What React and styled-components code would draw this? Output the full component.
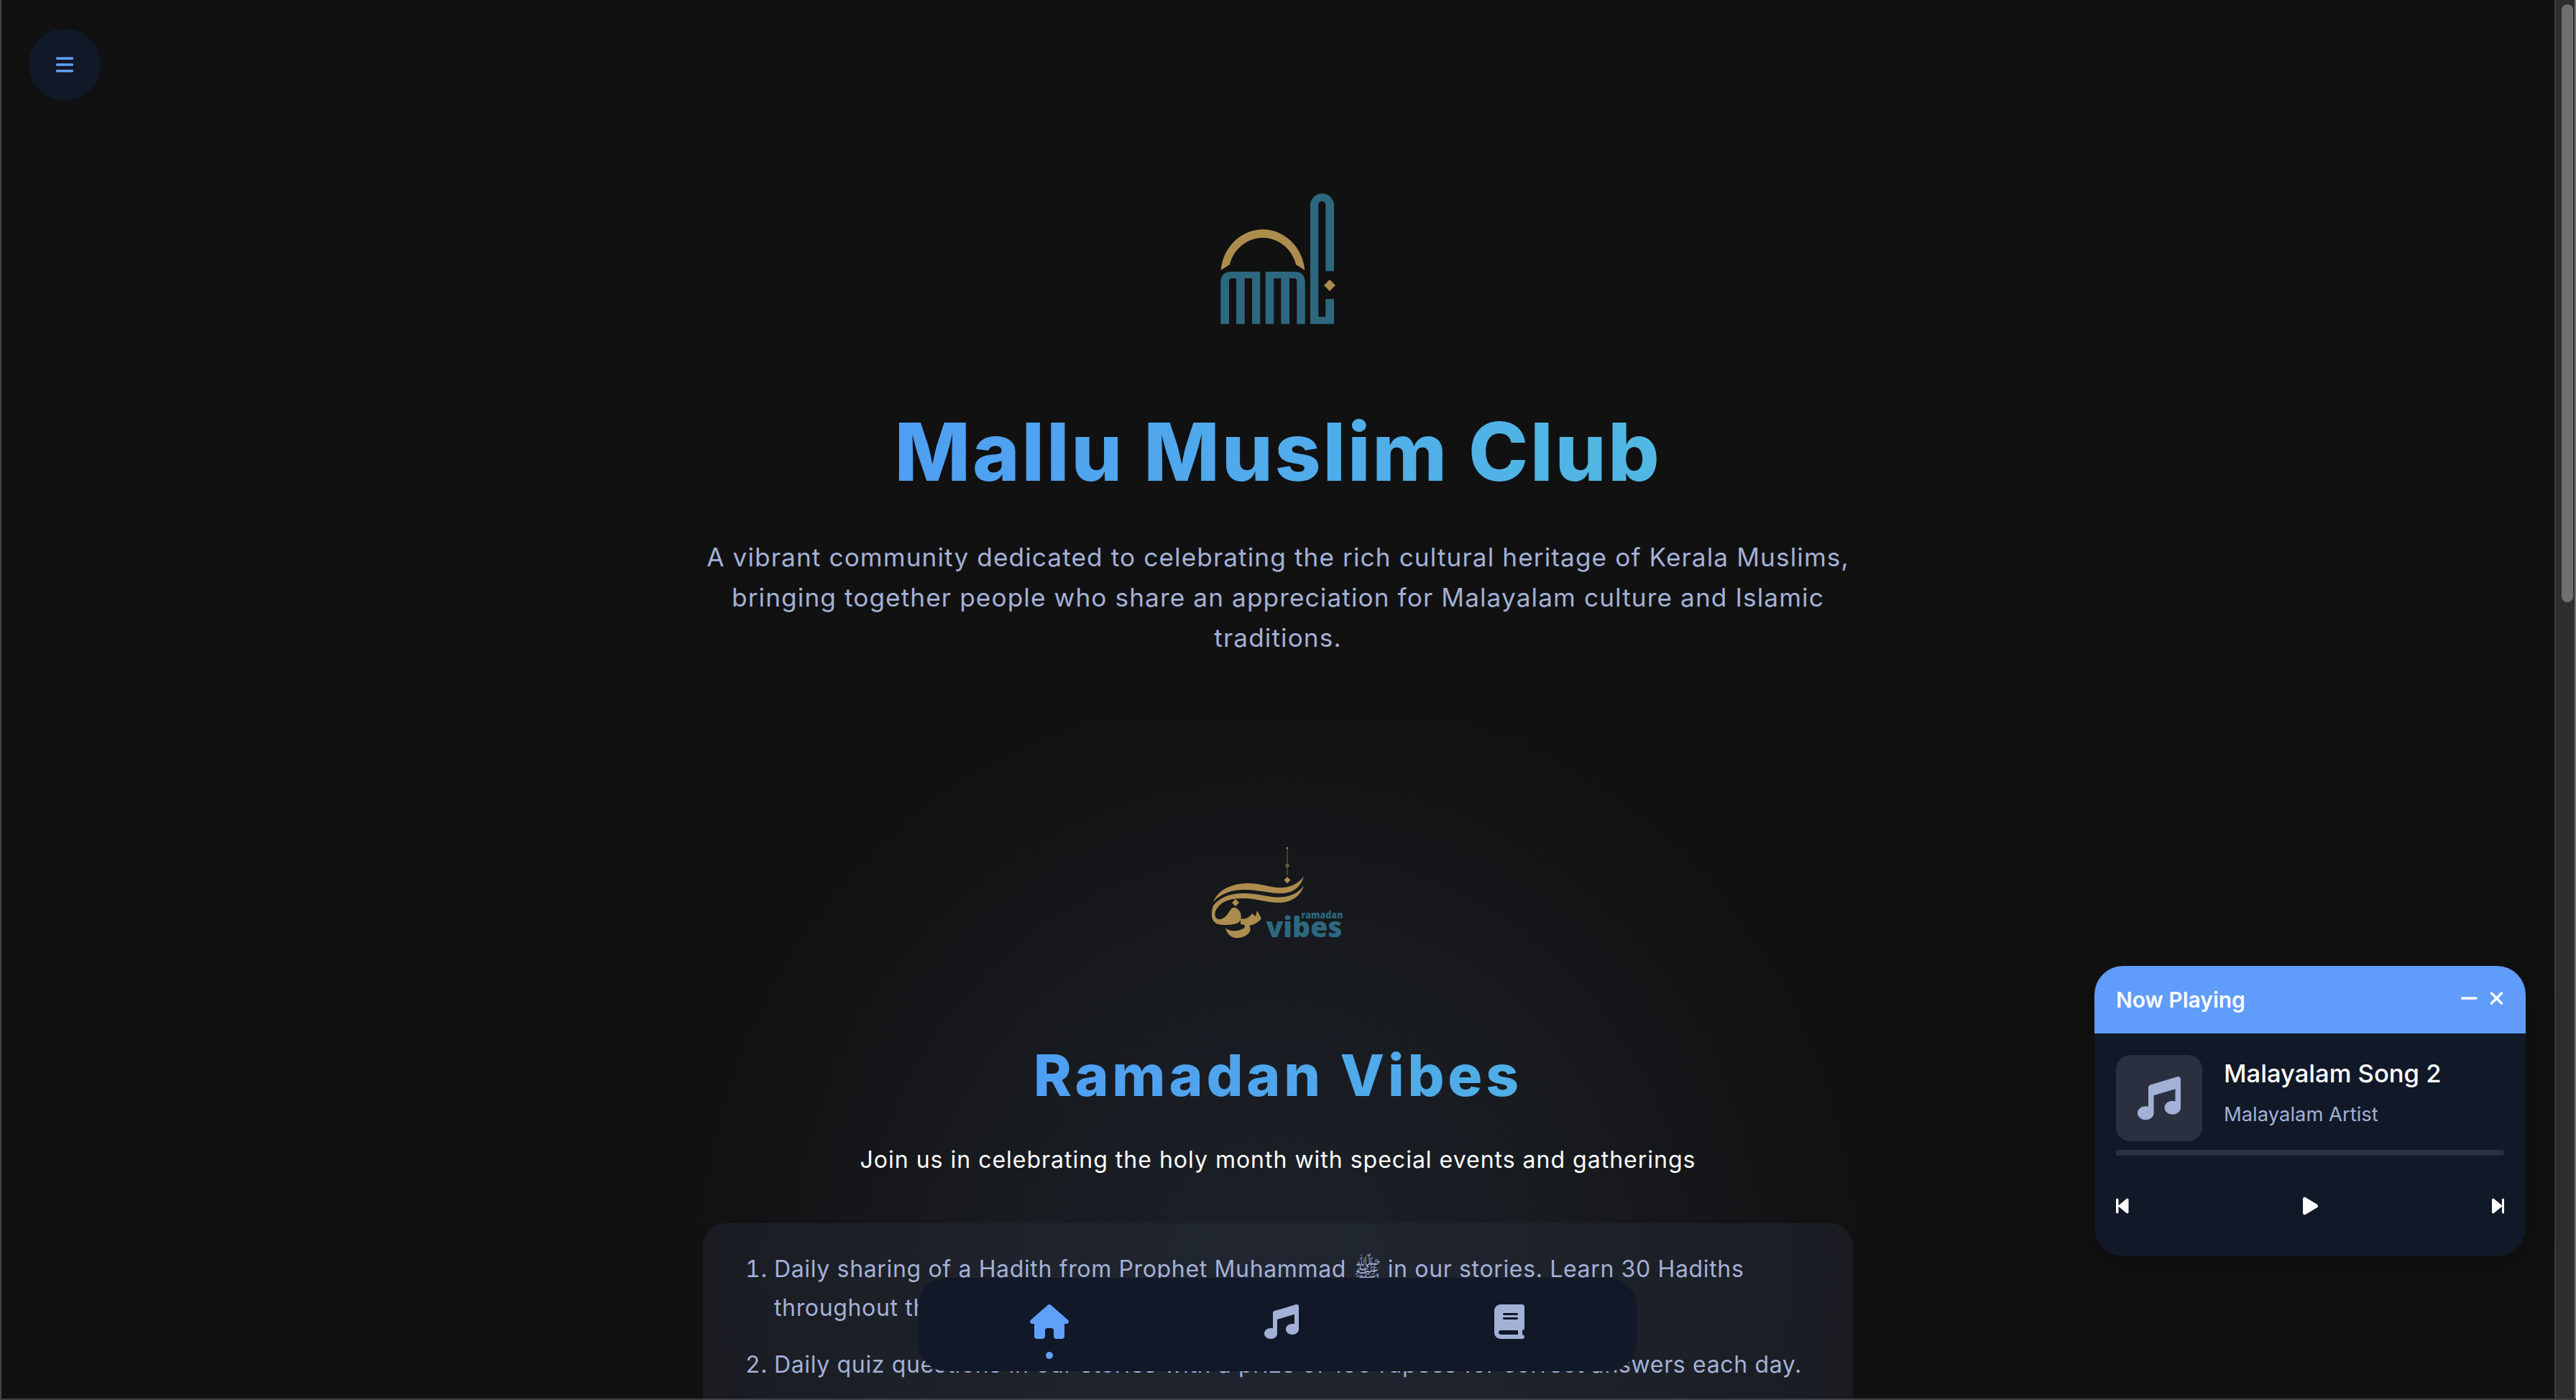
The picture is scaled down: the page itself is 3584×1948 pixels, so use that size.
import React from 'react';
import styled, { createGlobalStyle } from 'styled-components';
import { FaHouse, FaMusic, FaBook, FaBackwardStep, FaPlay, FaForwardStep, FaMinus, FaXmark, FaBars } from 'react-icons/fa6';

const Global = createGlobalStyle`
  html, body { margin: 0; padding: 0; background: #111111; overflow: hidden; }
  * { box-sizing: border-box; }
`;

const FONT = `Inter, "Noto Sans", "DejaVu Sans", sans-serif`;

const Frame = styled.div`
  position: relative;
  display: flex;
  width: 3584px;
  height: 1948px;
  overflow: hidden;
  background: #111111;
  border-left: 2px solid #45474a;
  border-bottom: 2px solid #3d4044;
  font-family: ${FONT};
`;

const Main = styled.main`
  flex: 1;
  min-width: 0;
  display: flex;
  flex-direction: column;
  align-items: center;
  padding-top: 269px;
`;

const Scrollbar = styled.div`
  flex: none;
  width: 30px;
  padding: 6px 6px 0 8px;
  background: #2e2e2e;
  border-left: 2px solid #3a3a3a;
  border-right: 2px solid #757575;
`;

const Thumb = styled.div`
  width: 16px;
  height: 832px;
  border-radius: 8px;
  background: #6f6f6f;
`;

const ClubLogo = styled.svg`
  display: block;
  width: 160px;
  height: 182px;
  flex: none;
`;

const Title = styled.h1`
  margin: 110px 0 52px;
  font-size: 112px;
  line-height: 134px;
  font-weight: 800;
  letter-spacing: 2.7px;
  background: linear-gradient(90deg, #4f9ef3, #50b8e2);
  -webkit-background-clip: text;
  background-clip: text;
  color: transparent;
`;

const Lead = styled.p`
  margin: 0;
  font-size: 35.2px;
  line-height: 56px;
  color: #a3b1d6;
  text-align: center;
  letter-spacing: 1.1px;
`;

const LeadLine = styled.span`
  display: block;
  white-space: nowrap;
`;

const Section = styled.section`
  flex: none;
  width: 1640px;
  height: 1300px;
  margin-top: 85px;
  padding: 178px 20px 0;
  display: flex;
  flex-direction: column;
  align-items: center;
  background: radial-gradient(circle 820px at 50% 760px, rgba(34, 42, 54, 0.62) 0%, rgba(34, 42, 54, 0.42) 45%, rgba(34, 42, 54, 0) 100%);
`;

const VibesLogo = styled.svg`
  display: block;
  width: 184px;
  height: 128px;
  flex: none;
`;

const Heading = styled.h2`
  margin: 142px 0 42px;
  font-size: 80px;
  line-height: 96px;
  font-weight: 800;
  letter-spacing: 4.9px;
  background: linear-gradient(90deg, #4f9ef3, #50aee6);
  -webkit-background-clip: text;
  background-clip: text;
  color: transparent;
`;

const Sub = styled.p`
  margin: 0 0 60px;
  font-size: 32px;
  line-height: 56px;
  letter-spacing: 1px;
  color: #ffffff;
  white-space: nowrap;
`;

const Card = styled.div`
  width: 1600px;
  padding: 37px 40px 40px 60px;
  border-radius: 32px;
  background: rgba(42, 50, 66, 0.35);
`;

const Steps = styled.ol`
  margin: 0;
  padding: 0 0 0 39px;
`;

const Step = styled.li`
  margin-bottom: 24px;
  font-size: 32px;
  line-height: 54.4px;
  letter-spacing: 0.65px;
  color: #a3b1d6;
`;

const MenuButton = styled.button`
  position: absolute;
  left: 38px;
  top: 40px;
  width: 100px;
  height: 100px;
  padding: 0;
  border: 0;
  border-radius: 50%;
  display: flex;
  align-items: center;
  justify-content: center;
  background: #111827;
  color: #60a0fa;
  font-size: 28px;
`;

const BottomNav = styled.nav`
  position: absolute;
  left: 1275px;
  bottom: 38px;
  width: 1000px;
  height: 130px;
  padding: 37px 20px 0;
  display: flex;
  justify-content: space-around;
  align-items: flex-start;
  border-radius: 40px;
  background: #111827;
`;

const NavItem = styled.a`
  position: relative;
  display: flex;
  color: ${p => (p.$active ? '#60a0fa' : '#a3b1d6')};
  font-size: 48px;
  svg { width: ${p => p.$iconWidth}px; }
`;

const NavDot = styled.span`
  position: absolute;
  left: 50%;
  top: 66px;
  width: 10px;
  height: 10px;
  margin-left: -5px;
  border-radius: 50%;
  background: #60a0fa;
`;

const Player = styled.aside`
  position: absolute;
  right: 70px;
  bottom: 198px;
  width: 600px;
  height: 404px;
  border-radius: 40px;
  overflow: hidden;
  background: #111827;
  box-shadow: 0 10px 40px rgba(0, 0, 0, 0.25);
`;

const PlayerHead = styled.header`
  height: 94px;
  padding: 0 30px;
  display: flex;
  align-items: center;
  justify-content: space-between;
  background: #609cf9;
  color: #ffffff;
`;

const PlayerLabel = styled.span`
  font-size: 30px;
  font-weight: 600;
`;

const HeadIcons = styled.div`
  display: flex;
  align-items: center;
  gap: 16px;
  font-size: 28px;
  margin-top: -4px;
`;

const MinusIcon = styled(FaMinus)`
  width: 24.5px;
`;

const CloseIcon = styled(FaXmark)`
  width: 21px;
`;

const PlayerBody = styled.div`
  padding: 30px;
`;

const Track = styled.div`
  display: flex;
  gap: 30px;
  align-items: flex-start;
`;

const Art = styled.div`
  flex: none;
  width: 120px;
  height: 120px;
  display: flex;
  align-items: center;
  justify-content: center;
  border-radius: 20px;
  background: #2a303f;
  color: #a3b1d6;
  font-size: 60px;
`;

const TrackText = styled.div`
  padding-top: 5px;
`;

const TrackName = styled.div`
  font-size: 34.6px;
  line-height: 40px;
  font-weight: 500;
  color: #ffffff;
  margin-bottom: 21px;
`;

const TrackArtist = styled.div`
  font-size: 27.4px;
  line-height: 32px;
  color: #a3b1d6;
`;

const Progress = styled.div`
  height: 8px;
  margin-top: 12px;
  border-radius: 4px;
  background: #2a303f;
`;

const Controls = styled.div`
  margin-top: 56px;
  display: flex;
  align-items: center;
  justify-content: space-between;
  color: #ffffff;
  font-size: 28px;
`;

const PrevIcon = styled(FaBackwardStep)`
  width: 17.5px;
`;

const NextIcon = styled(FaForwardStep)`
  width: 17.5px;
`;

const PlayIcon = styled(FaPlay)`
  width: 21px;
`;

const LogoMark = () => (
  <ClubLogo viewBox="97 49 160 182" aria-label="Mallu Muslim Club logo">
    <path fill="#ac8d4e" d="M97.7 156 C100 125 125 99.3 156 99.3 C187 99.3 212 125 214.3 156 L202 148 C197 127 178 110.7 156 110.7 C134 110.7 115 127 110 148 Z" />
    <g fill="#2d687f">
      <path d="M97.3 230.7 V173 Q97.3 158 112.3 158 H152.3 V230.7 H141 V167.3 H130.7 V230.7 H119 V167.3 H113 Q109 167.3 109 171.3 V230.7 Z" />
      <path d="M159.7 158 H199.7 Q214.7 158 214.7 173 V230.7 H203.3 V171.3 Q203.3 167.3 199.3 167.3 H193 V230.7 H181.3 V167.3 H171.3 V230.7 H159.7 Z" />
      <path d="M222 230.7 V65.8 A16.5 16.5 0 0 1 255 65.8 V157.3 H243.3 V65 A5 5 0 0 0 233.3 65 V220.7 H243.3 V196 H255 V230.7 Z" />
    </g>
    <path fill="#ac8d4e" d="M249 169 L257 177 L249 185 L241 177 Z" />
  </ClubLogo>
);

const VibesMark = () => (
  <VibesLogo viewBox="66 28 184 128" aria-label="Ramadan Vibes logo">
    <g fill="#ac8d4e">
      <rect x="170.5" y="30" width="1.2" height="38" opacity="0.55" />
      <circle cx="171" cy="30" r="1.3" />
      <circle cx="171" cy="54.5" r="2" fill="none" stroke="#ac8d4e" strokeWidth="1" />
      <path d="M171 70 L175.5 74.5 L171 79 L166.5 74.5 Z" />
      <path d="M68 105 C75 88 92 80 115 79 C135 79 150 86 165 85 C178 84 188 78 194 69 C190 85 178 93 162 93 C145 93 130 88 112 88 C92 88 78 94 68 105 Z" />
      <path d="M68 110 C78 97 95 92 115 93 C135 94 150 100 165 98 C178 97 188 91 194 82 C190 97 176 106 160 106 C140 106 128 100 112 100 C95 100 80 102 72 116 C68 124 72 130 78 129 C84 128 88 122 92 116 C95 112 98 112 101 114 C108 119 108 128 104 133 C98 137 84 138 75 136 C68 134 65 127 66 120 C66 116 67 113 68 110 Z" />
      <path d="M99 101 L104 106 L99 111 L94 106 Z" />
      <path d="M106 128 C112 130 118 127 122 121 L127 125 L129 117 L135 128 C130 134 124 137 118 138 C123 145 116 153 104 155 C95 156 88 152 85 141 C92 147 102 146 110 142 C114 139 112 136 106 136 Z" />
    </g>
    <g fill="#2d687f" fontFamily='"Open Sans", sans-serif' fontWeight="800">
      <text x="190.5" y="127.5" fontSize="14.5" textLength="58" lengthAdjust="spacingAndGlyphs">ramadan</text>
      <text x="141.5" y="154" fontSize="39" textLength="106" lengthAdjust="spacingAndGlyphs">vibes</text>
    </g>
  </VibesLogo>
);

export default function App() {
  return (
    <>
      <Global />
      <Frame>
        <Main>
          <LogoMark />
          <Title>Mallu Muslim Club</Title>
          <Lead>
            <LeadLine>A vibrant community dedicated to celebrating the rich cultural heritage of Kerala Muslims,</LeadLine>
            <LeadLine>bringing together people who share an appreciation for Malayalam culture and Islamic</LeadLine>
            <LeadLine>traditions.</LeadLine>
          </Lead>
          <Section>
            <VibesMark />
            <Heading>Ramadan Vibes</Heading>
            <Sub>Join us in celebrating the holy month with special events and gatherings</Sub>
            <Card>
              <Steps>
                <Step>Daily sharing of a Hadith from Prophet Muhammad ﷺ in our stories. Learn 30 Hadiths throughout the month.</Step>
                <Step>Daily quiz questions in our stories with a prize of 100 rupees for correct answers each day.</Step>
              </Steps>
            </Card>
          </Section>
        </Main>
        <Scrollbar><Thumb /></Scrollbar>
        <MenuButton aria-label="Menu"><FaBars /></MenuButton>
        <BottomNav>
          <NavItem $active $iconWidth={54}><FaHouse /><NavDot /></NavItem>
          <NavItem $iconWidth={48}><FaMusic /></NavItem>
          <NavItem $iconWidth={42}><FaBook /></NavItem>
        </BottomNav>
        <Player>
          <PlayerHead>
            <PlayerLabel>Now Playing</PlayerLabel>
            <HeadIcons><MinusIcon /><CloseIcon /></HeadIcons>
          </PlayerHead>
          <PlayerBody>
            <Track>
              <Art><FaMusic /></Art>
              <TrackText>
                <TrackName>Malayalam Song 2</TrackName>
                <TrackArtist>Malayalam Artist</TrackArtist>
              </TrackText>
            </Track>
            <Progress />
            <Controls><PrevIcon /><PlayIcon /><NextIcon /></Controls>
          </PlayerBody>
        </Player>
      </Frame>
    </>
  );
}
